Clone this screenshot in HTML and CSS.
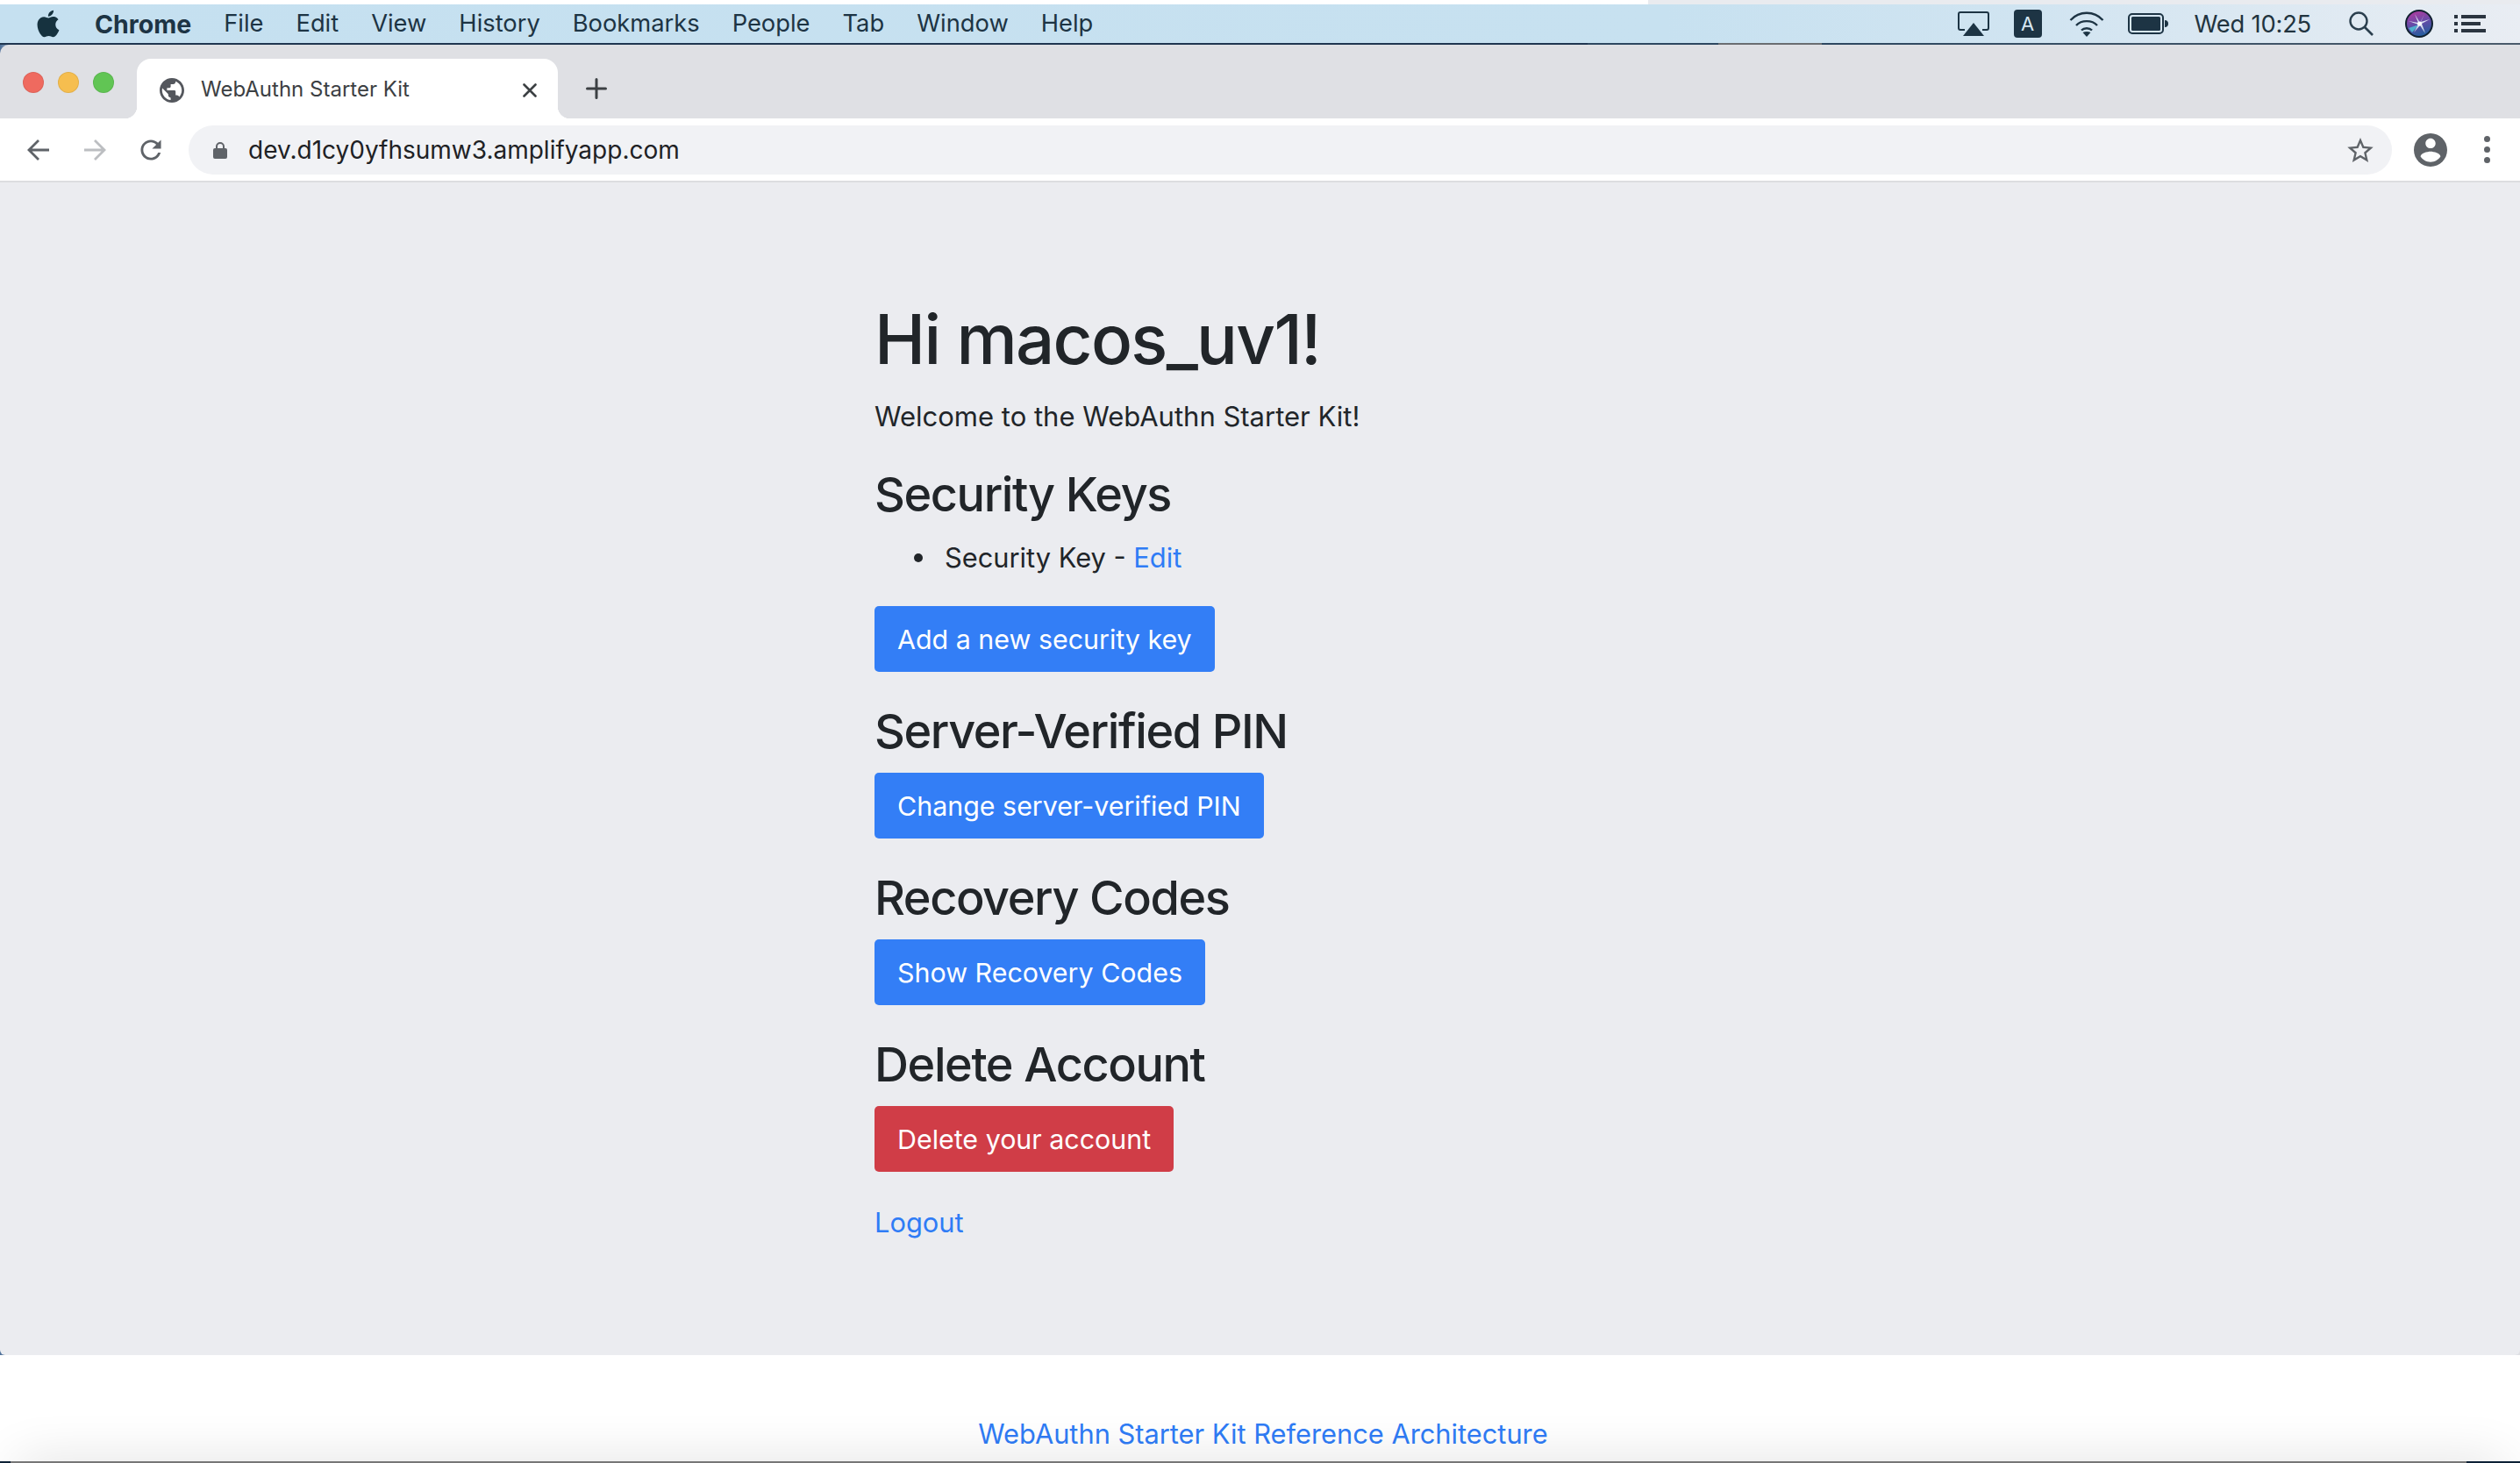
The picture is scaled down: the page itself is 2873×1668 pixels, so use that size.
FILE: index.html
```html
<!DOCTYPE html>
<html lang="en">
<head>
    <meta charset="UTF-8">
    <title>WebAuthn Starter Kit</title>
    <link rel="stylesheet" href="styles.css">
</head>
<body>

<div class="topline"></div>

<header class="menubar">
    <svg class="apple" viewBox="3.5 1.8 17 20.4"><path d="M18.71 19.5c-.83 1.24-1.71 2.45-3.05 2.47-1.34.03-1.77-.79-3.29-.79-1.53 0-2 .77-3.27.82-1.31.05-2.3-1.32-3.14-2.53C4.25 17 2.94 12.45 4.7 9.39c.87-1.52 2.43-2.48 4.12-2.51 1.28-.02 2.5.87 3.29.87.78 0 2.26-1.07 3.81-.91.65.03 2.47.26 3.64 1.98-.09.06-2.17 1.28-2.15 3.81.03 3.02 2.65 4.03 2.68 4.04-.03.07-.42 1.44-1.38 2.83M13 3.5c.73-.83 1.94-1.46 2.94-1.5.13 1.17-.34 2.35-1.04 3.19-.69.85-1.83 1.51-2.95 1.42-.15-1.15.41-2.35 1.05-3.11z"/></svg>
    <ul class="menu">
        <li class="app-name">Chrome</li>
        <li>File</li>
        <li>Edit</li>
        <li>View</li>
        <li>History</li>
        <li>Bookmarks</li>
        <li>People</li>
        <li>Tab</li>
        <li>Window</li>
        <li>Help</li>
    </ul>
    <div class="status">
        <svg class="st-airplay" viewBox="0 0 36 28">
            <path d="M8 21H3a2 2 0 0 1-2-2V3a2 2 0 0 1 2-2h30a2 2 0 0 1 2 2v16a2 2 0 0 1-2 2h-5" fill="none" stroke="#1d3444" stroke-width="2"/>
            <path d="M18 13 L30 28 H6 Z" fill="#1d3444"/>
        </svg>
        <span class="st-input">A</span>
        <svg class="st-wifi" viewBox="0 0 40 29">
            <path d="M1.5 10 C11.5 -1 28.5 -1 38.5 10" fill="none" stroke="#1d3444" stroke-width="2.4"/>
            <path d="M8 16 C14 9.5 26 9.5 32 16" fill="none" stroke="#1d3444" stroke-width="2.4"/>
            <path d="M14 21.5 C17 18.5 23 18.5 26 21.5" fill="none" stroke="#1d3444" stroke-width="2.4"/>
            <path d="M15.5 24 L20 29 L24.5 24 Q20 22 15.5 24 Z" fill="#1d3444"/>
        </svg>
        <svg class="st-battery" viewBox="0 0 46 24">
            <rect x="1" y="1" width="39" height="22" rx="4" fill="none" stroke="#1d3444" stroke-width="2"/>
            <rect x="4" y="4" width="33" height="16" rx="1.5" fill="#1d3444"/>
            <path d="M42 8 C45 8 46 10 46 12 C46 14 45 16 42 16 Z" fill="#1d3444"/>
        </svg>
        <span class="st-clock">Wed 10:25</span>
        <svg class="st-search" viewBox="0 0 28 28">
            <circle cx="11" cy="11" r="9.5" fill="none" stroke="#2b3f4e" stroke-width="2.4"/>
            <path d="M18 18 L27 27" stroke="#2b3f4e" stroke-width="2.6"/>
        </svg>
        <svg class="st-siri" viewBox="0 0 32 32">
            <defs>
                <linearGradient id="siri-bg" x1="0.3" y1="0" x2="0.6" y2="1">
                    <stop offset="0" stop-color="#b23a9e"/>
                    <stop offset="0.45" stop-color="#6a4aa8"/>
                    <stop offset="1" stop-color="#1f5f9e"/>
                </linearGradient>
            </defs>
            <circle cx="16" cy="16" r="15" fill="url(#siri-bg)" stroke="#10202f" stroke-width="2"/>
            <path d="M16 17 L4 21 L8 26 Z" fill="#4fc8d8" opacity="0.8"/>
            <path d="M17 15 L11 5 L15 15 L4 13 L15 17 L10 26 L17 18 L23 27 L19 16 L28 11 L18 14 L22 5 Z" fill="#e9f3fb" opacity="0.85"/>
            <circle cx="16.5" cy="16" r="2.5" fill="#fff"/>
        </svg>
        <svg class="st-list" viewBox="0 0 36 20">
            <rect x="0" y="0" width="4" height="4" fill="#2b3540"/>
            <rect x="8" y="0" width="28" height="4" fill="#2b3540"/>
            <rect x="0" y="8" width="4" height="4" fill="#2b3540"/>
            <rect x="8" y="8" width="22" height="4" fill="#2b3540"/>
            <rect x="0" y="16" width="4" height="4" fill="#2b3540"/>
            <rect x="8" y="16" width="28" height="4" fill="#2b3540"/>
        </svg>
    </div>
</header>

<div class="window">
    <div class="tabstrip">
        <div class="lights">
            <span class="light red"></span>
            <span class="light yellow"></span>
            <span class="light green"></span>
        </div>
        <div class="tab">
            <svg class="tab-globe" viewBox="2 2 20 20"><path fill="#54575d" d="M12 2C6.48 2 2 6.48 2 12s4.48 10 10 10 10-4.48 10-10S17.52 2 12 2zm-1 17.93c-3.95-.49-7-3.85-7-7.93 0-.62.08-1.21.21-1.79L9 15v1c0 1.1.9 2 2 2v1.93zm6.9-2.54c-.26-.81-1-1.39-1.9-1.39h-1v-3c0-.55-.45-1-1-1H8v-2h2c.55 0 1-.45 1-1V7h2c1.1 0 2-.9 2-2v-.41c2.93 1.19 5 4.06 5 7.41 0 2.08-.8 3.97-2.1 5.39z"/></svg>
            <span class="tab-title">WebAuthn Starter Kit</span>
            <svg class="tab-close" viewBox="0 0 16 16"><path d="M1.5 1.5 L14.5 14.5 M14.5 1.5 L1.5 14.5" stroke="#3c4043" stroke-width="2.6" stroke-linecap="round"/></svg>
        </div>
        <svg class="tab-new" viewBox="0 0 24 24"><path d="M12 1.5 V22.5 M1.5 12 H22.5" stroke="#3c4043" stroke-width="3" stroke-linecap="round"/></svg>
    </div>

    <div class="toolbar">
        <svg class="nav-btn" viewBox="0 0 26 26"><path d="M25 13 H3 M13 2 L2 13 L13 24" fill="none" stroke="#5f6368" stroke-width="2.8"/></svg>
        <svg class="nav-btn nav-next" viewBox="0 0 26 26"><path d="M1 13 H23 M13 2 L24 13 L13 24" fill="none" stroke="#bcbec1" stroke-width="2.8"/></svg>
        <svg class="nav-btn nav-reload" viewBox="3 3 18 18"><path fill="#5f6368" d="M17.65 6.35C16.2 4.9 14.21 4 12 4c-4.42 0-7.99 3.58-7.99 8s3.57 8 7.99 8c3.73 0 6.84-2.55 7.73-6h-2.08c-.82 2.33-3.04 4-5.65 4-3.31 0-6-2.69-6-6s2.69-6 6-6c1.66 0 3.14.69 4.22 1.78L13 11h7V4l-2.35 2.35z"/></svg>
        <div class="omnibox">
            <svg class="omni-lock" viewBox="0 0 16 20">
                <path d="M4 9 V6 a4 4 0 0 1 8 0 V9" fill="none" stroke="#5f6368" stroke-width="2"/>
                <rect x="0" y="8" width="16" height="12" rx="2" fill="#5f6368"/>
            </svg>
            <span class="omni-url">dev.d1cy0yfhsumw3.amplifyapp.com</span>
            <svg class="omni-star" viewBox="2 2 20 19"><path fill="#5f6368" d="M22 9.24l-7.19-.62L12 2 9.19 8.63 2 9.24l5.46 4.73L5.82 21 12 17.27 18.18 21l-1.63-7.03L22 9.24zM12 15.4l-3.76 2.27 1-4.28-3.32-2.88 4.38-.38L12 6.1l1.71 4.04 4.38.38-3.32 2.88 1 4.28L12 15.4z"/></svg>
        </div>
        <svg class="tool-profile" viewBox="2 2 20 20"><path fill="#5f6368" d="M12 2C6.48 2 2 6.48 2 12s4.48 10 10 10 10-4.48 10-10S17.52 2 12 2zm0 3c1.66 0 3 1.34 3 3s-1.34 3-3 3-3-1.34-3-3 1.34-3 3-3zm0 14.2c-2.5 0-4.71-1.28-6-3.22.03-1.99 4-3.08 6-3.08 1.99 0 5.97 1.09 6 3.08-1.29 1.94-3.5 3.22-6 3.22z"/></svg>
        <div class="tool-dots"><span></span><span></span><span></span></div>
    </div>

    <main class="page">
        <div class="content">
            <h1>Hi macos_uv1!</h1>
            <p class="welcome">Welcome to the WebAuthn Starter Kit!</p>

            <h2>Security Keys</h2>
            <ul class="keys">
                <li>Security Key - <a href="#">Edit</a></li>
            </ul>
            <button class="btn">Add a new security key</button>

            <h2>Server-Verified PIN</h2>
            <button class="btn">Change server-verified PIN</button>

            <h2>Recovery Codes</h2>
            <button class="btn">Show Recovery Codes</button>

            <h2>Delete Account</h2>
            <button class="btn btn-danger">Delete your account</button>

            <p class="logout"><a href="#">Logout</a></p>
        </div>
    </main>

    <footer class="foot">
        <a href="#">WebAuthn Starter Kit Reference Architecture</a>
    </footer>
</div>

<div class="screen-shadow"></div>
<div class="screen-edge"></div>

</body>
</html>
```

FILE: styles.css
```css
html, body {
    margin: 0;
    padding: 0;
}

body {
    position: relative;
    width: 2873px;
    height: 1668px;
    overflow: hidden;
    display: flex;
    flex-direction: column;
    font-family: Inter, "Noto Sans", sans-serif;
    color: #212529;
    background: #fff;
}

a {
    color: #2f7cf6;
    text-decoration: none;
}

/* mac menu bar */
.topline {
    height: 5px;
    background: linear-gradient(to right, #fff 1879px, #e9ebef 1879px);
}

.menubar {
    height: 44px;
    display: flex;
    align-items: center;
    padding-left: 42px;
    font-size: 27.3px;
    color: #1d3444;
    border-bottom: 2px solid;
    border-image: linear-gradient(to right, #1f3650 1810px, #2d4760 1810px, #2d4760 1959px, #6a6d70 1959px, #6a6d70 2077px, #2d4760 2077px, #4a5b6b 2873px) 1;
    background: linear-gradient(to right, #c5e0f0 0, #c7e1f0 1900px, #d0e4f1 2300px, #e9edf3 2873px);
}

.apple {
    width: 26px;
    height: 32px;
    fill: #16323f;
}

.menu {
    list-style: none;
    margin: 0 0 0 40px;
    padding: 0;
    display: flex;
    gap: 37px;
}

.app-name {
    font-weight: 700;
    font-size: 28.5px;
}

.status {
    margin-left: auto;
    display: flex;
    align-items: center;
    padding-right: 39px;
}

.st-airplay {
    width: 36px;
    height: 28px;
}

.st-input {
    width: 32px;
    height: 32px;
    margin-left: 28px;
    border-radius: 4px;
    background: #1d3444;
    color: #d6e6f1;
    font-size: 22px;
    line-height: 32px;
    text-align: center;
}

.st-wifi {
    width: 40px;
    height: 29px;
    margin-left: 31px;
}

.st-battery {
    width: 46px;
    height: 24px;
    margin-left: 27px;
}

.st-clock {
    margin-left: 30px;
    color: #22343f;
    letter-spacing: -0.2px;
}

.st-search {
    width: 28px;
    height: 28px;
    margin-left: 43px;
}

.st-siri {
    width: 32px;
    height: 32px;
    margin-left: 36px;
}

.st-list {
    width: 36px;
    height: 20px;
    margin-left: 24px;
}

/* browser window */
.window {
    flex: 1;
    display: flex;
    flex-direction: column;
    background: linear-gradient(to right, #4d7099, #dfe0e4 20px);
}

.tabstrip {
    height: 84px;
    box-sizing: border-box;
    padding: 16px 0 0 26px;
    display: flex;
    align-items: flex-start;
    background: #dfe0e4;
    border-radius: 10px 0 0 0;
}

.lights {
    display: flex;
    gap: 16px;
    padding-top: 15px;
}

.light {
    width: 24px;
    height: 24px;
    box-sizing: border-box;
    border-radius: 50%;
    border: 1px solid rgba(0, 0, 0, 0.08);
}

.red { background: #ef6a5f; }
.yellow { background: #f6be4f; }
.green { background: #61c554; }

.tab {
    position: relative;
    width: 480px;
    height: 68px;
    box-sizing: border-box;
    margin-left: 26px;
    padding: 0 24px 0 26px;
    display: flex;
    align-items: center;
    background: #fff;
    border-radius: 16px 16px 0 0;
}

.tab::before,
.tab::after {
    content: "";
    position: absolute;
    bottom: 0;
    width: 14px;
    height: 14px;
}

.tab::before {
    left: -14px;
    background: radial-gradient(circle at 0 0, #dfe0e4 14px, #fff 14.5px);
}

.tab::after {
    right: -14px;
    background: radial-gradient(circle at 100% 0, #dfe0e4 14px, #fff 14.5px);
}

.tab-globe {
    width: 28px;
    height: 28px;
    margin-top: 4px;
}

.tab-title {
    margin-left: 19px;
    font-size: 24px;
    color: #3c4043;
}

.tab-close {
    width: 16px;
    height: 16px;
    margin-left: auto;
    margin-top: 4px;
}

.tab-new {
    width: 24px;
    height: 24px;
    margin: 22px 0 0 32px;
}

.toolbar {
    height: 71px;
    box-sizing: border-box;
    padding-left: 31px;
    display: flex;
    align-items: center;
    background: #fff;
}

.nav-btn {
    width: 26px;
    height: 26px;
}

.nav-next {
    margin-left: 38px;
}

.nav-reload {
    margin-left: 38px;
}

.omnibox {
    width: 2512px;
    height: 56px;
    box-sizing: border-box;
    margin-left: 30px;
    padding: 0 28px;
    display: flex;
    align-items: center;
    background: #f1f2f5;
    border-radius: 28px;
}

.omni-lock {
    width: 16px;
    height: 20px;
}

.omni-url {
    margin-left: 24px;
    font-size: 28px;
    color: #202124;
}

.omni-star {
    width: 30px;
    height: 28px;
    margin-left: auto;
    margin-right: -7px;
}

.tool-profile {
    width: 38px;
    height: 38px;
    margin-left: 25px;
}

.tool-dots {
    display: flex;
    flex-direction: column;
    gap: 5px;
    margin-left: 42px;
}

.tool-dots span {
    width: 7px;
    height: 7px;
    border-radius: 50%;
    background: #5f6368;
}

/* page */
.page {
    height: 1339px;
    box-sizing: border-box;
    border-top: 2px solid #dcdde0;
    background: #ebecf0;
    border-radius: 0 0 6px 6px;
}

.content {
    width: 879px;
    margin: 0 auto;
    padding-top: 135px;
    font-size: 30.8px;
    line-height: 44px;
}

h1 {
    margin: 0 0 22px;
    font-size: 78px;
    font-weight: 500;
    line-height: 88px;
    letter-spacing: -1.7px;
}

h2 {
    margin: 0 0 14px;
    font-size: 54px;
    font-weight: 500;
    line-height: 66px;
    letter-spacing: -1.4px;
}

.welcome {
    margin: 0 0 34px;
    font-size: 31px;
}

.keys {
    list-style: none;
    margin: 17px 0 33px;
    padding-left: 80px;
}

.keys li {
    position: relative;
}

.keys li::before {
    content: "";
    position: absolute;
    left: -35px;
    top: 17px;
    width: 10px;
    height: 10px;
    border-radius: 50%;
    background: #212529;
}

.btn {
    display: block;
    height: 75px;
    margin: 0 0 35px;
    padding: 0 26px;
    border: none;
    border-radius: 5px;
    background: #337ef6;
    color: #fff;
    font-family: inherit;
    font-size: 30.4px;
}

.btn-danger {
    background: #d03d47;
    margin-bottom: 36px;
}

.logout {
    margin: 0;
}

.foot {
    flex: 1;
    padding-top: 68px;
    text-align: center;
    font-size: 30.8px;
    line-height: 44px;
    background: #fff;
}

.foot a {
    margin-left: 7px;
}

/* shadow of the screen edge over the window bottom */
.screen-shadow {
    position: absolute;
    left: 20px;
    right: 20px;
    bottom: -40px;
    height: 40px;
    box-shadow: 0 0 60px rgba(0, 0, 0, 0.14);
}

.screen-edge {
    position: absolute;
    left: 0;
    right: 0;
    bottom: 0;
    height: 2px;
    background: linear-gradient(to right, #0d2136 12px, #777 12px, #777 2812px, #0d2136 2812px);
}
```
